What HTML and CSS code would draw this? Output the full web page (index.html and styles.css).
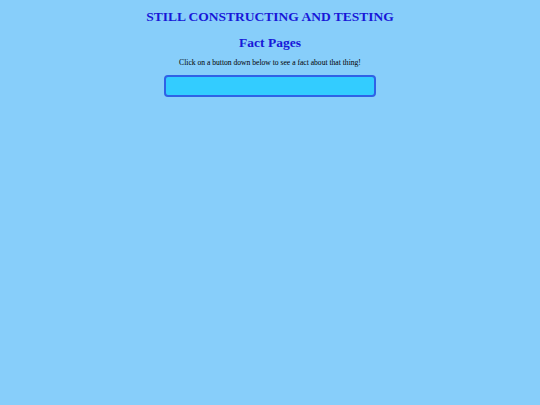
FILE: index.html
```html
<!DOCTYPE html>
<html>
<head>
<meta charset="utf-8">
<link rel="stylesheet" href="styles.css">
</head>
<body>
<div class="page">
  <h1 class="title">STILL CONSTRUCTING AND TESTING</h1>
  <h2 class="subtitle">Fact Pages</h2>
  <p class="intro">Click on a button down below to see a fact about that thing!</p>
  <div class="buttons"></div>
</div>
</body>
</html>
```
FILE: styles.css
```css
html, body {
  margin: 0;
  padding: 0;
  background: #87cefa;
}
.page {
  font-family: "Liberation Serif", serif;
  display: flex;
  flex-direction: column;
  align-items: center;
  padding-top: 8px;
}
.title {
  margin: 0;
  font-size: 13.5px;
  font-weight: bold;
  color: #1818d8;
  line-height: 17px;
}
.subtitle {
  margin: 9px 0 0 0;
  font-size: 13.5px;
  font-weight: bold;
  color: #1818d8;
  line-height: 17px;
}
.intro {
  margin: 7px 0 0 0;
  font-size: 7.6px;
  line-height: 10px;
  color: #000;
}
.buttons {
  margin-top: 7px;
  width: 208px;
  height: 18px;
  background: #33ccff;
  border: 2px solid #2f62e6;
  border-radius: 4px;
}
```
